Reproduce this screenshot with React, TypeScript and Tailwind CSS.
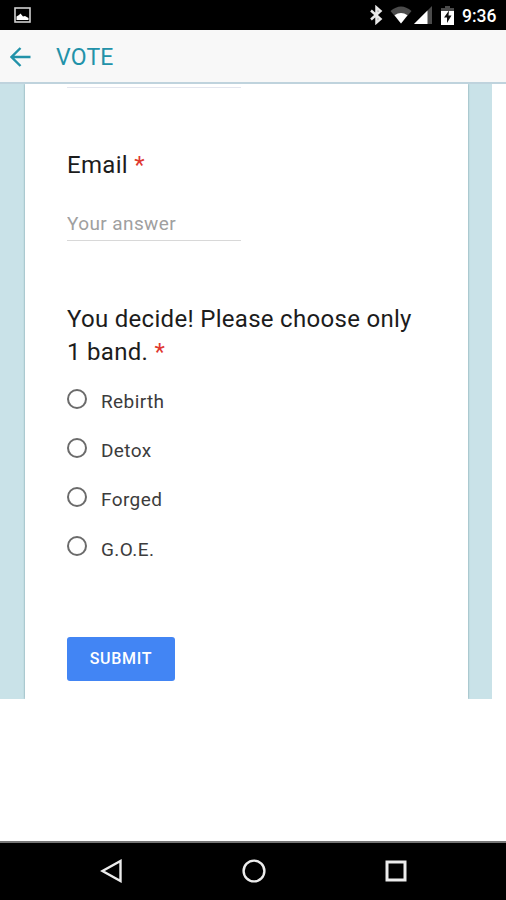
const options = ["Rebirth", "Detox", "Forged", "G.O.E."];

const StatusBar = () => (
  <div className="flex h-[30px] shrink-0 items-center bg-black pl-[14px] pr-[9px] text-white">
    <svg className="h-4 w-[17px]" viewBox="0 0 17 16" fill="none">
      <rect x="1" y="1" width="15" height="14" stroke="#d0d0d0" strokeWidth="1.6" />
      <path d="M2.5 13V9.5L5 8L6.5 6.5L9 9.5L11 9L14.5 11V13Z" fill="#fff" />
    </svg>
    <div className="ml-auto flex items-center">
      <svg className="h-5 w-[14px]" viewBox="0 0 14 20" fill="none" stroke="#e8e8e8" strokeWidth="2.5">
        <path d="M2 5.5L11.5 14L7.5 17.5V2.5L11.5 6L2 14.5" />
      </svg>
      <svg className="ml-[7px] h-[18px] w-[22px]" viewBox="0 0 22 18">
        <path d="M0.5 5Q11 -4 21.5 5L11 17.5Z" fill="#4b4b4b" />
        <path d="M4.5 9.3Q11 4.5 17.5 9.3L11 17.5Z" fill="#fff" />
      </svg>
      <svg className="ml-[2px] h-[18px] w-[18px]" viewBox="0 0 18 18">
        <path d="M18 0V18H0Z" fill="#4b4b4b" />
        <path d="M13.5 4.5V18H0Z" fill="#fff" />
      </svg>
      <svg className="ml-[9px] h-[19px] w-[13px]" viewBox="0 0 13 19">
        <path d="M4 0H9V2H13V6H0V2H4Z" fill="#4b4b4b" />
        <path d="M0 5H13V19H0Z" fill="#fff" />
        <path d="M8 4.5L3 11.5H6V17L10.5 9.5H7.5Z" fill="#111" />
      </svg>
      <span className="ml-2 mt-[3px] w-[35px] whitespace-nowrap text-[17.5px] font-medium leading-none">9:36</span>
    </div>
  </div>
);

const Header = () => (
  <header className="flex h-[54px] shrink-0 items-center border-b-2 border-[#bfd3dd] bg-[#f8f8f8] pl-[10px] text-[#2292a9]">
    <button aria-label="Back">
      <svg className="mt-0.5 h-5 w-[21px]" viewBox="0 0 21 20" fill="none" stroke="currentColor" strokeWidth="2.4">
        <path d="M20.5 10H2M10.5 1L1.5 10L10.5 19" />
      </svg>
    </button>
    <h1 className="ml-[25px] mt-0.5 text-[23px] leading-none tracking-[0.2px]">VOTE</h1>
  </header>
);

const NavigationBar = () => (
  <nav className="mt-auto flex h-[59px] shrink-0 items-center border-t-2 border-[#777] bg-black pb-0.5 pl-[100px]">
    <svg className="h-6 w-[22px]" viewBox="0 0 22 24" fill="none" stroke="#ececec" strokeWidth="2.4">
      <path d="M20.5 2V22L2.5 12Z" />
    </svg>
    <svg className="ml-[120px] h-6 w-6" viewBox="0 0 24 24" fill="none" stroke="#ececec" strokeWidth="2.4">
      <circle cx="12" cy="12" r="10.4" />
    </svg>
    <svg className="ml-[119px] h-[22px] w-[22px]" viewBox="0 0 22 22" fill="none" stroke="#ececec" strokeWidth="3">
      <rect x="2" y="2" width="18" height="18" />
    </svg>
  </nav>
);

export default function App() {
  return (
    <div className="flex h-[900px] w-[506px] flex-col overflow-hidden bg-white font-['Roboto',sans-serif]">
      <StatusBar />
      <Header />
      <main className="flex h-[615px] w-[492px] shrink-0 bg-[#c9e2e8] pl-[25px] pr-6">
        <form className="flex w-[443px] flex-col items-start bg-white px-[42px] shadow-[0_0_2px_#6f979e] [clip-path:inset(0_-3px)]">
          <div className="h-[4px] w-[174px] shrink-0 border-b border-[#e3e6ee]" />
          <label htmlFor="email" className="mt-[61px] text-[24px] leading-[33px] tracking-[0.3px] text-[#1c1c1c]">
            Email <span className="text-[#e0382f]">*</span>
          </label>
          <input
            id="email"
            type="email"
            placeholder="Your answer"
            className="mt-[26px] h-[33px] w-[174px] border-b border-[#d8d8d8] pb-px text-[19px] tracking-[0.4px] outline-none placeholder:text-[#a0a0a0]"
          />
          <h2 className="mt-[62px] whitespace-nowrap text-[24px] leading-[33px] tracking-[0.3px] text-[#1c1c1c]">
            You decide! Please choose only
            <br />1 band. <span className="text-[#e0382f]">*</span>
          </h2>
          <div className="mt-[10px] flex flex-col">
            {options.map((option) => (
              <label key={option} className="flex h-[49.2px] items-start">
                <input
                  type="radio"
                  name="band"
                  value={option}
                  className="mt-[9.5px] size-5 appearance-none rounded-full border-2 border-[#6b6b6b]"
                />
                <span className="ml-[14px] mt-[11px] text-[19px] leading-6 tracking-[0.4px] text-[#3c3c3c]">
                  {option}
                </span>
              </label>
            ))}
          </div>
          <button
            type="button"
            className="mt-[61px] h-[44px] w-[108px] rounded-[3px] bg-[#4285f4] text-[16px] font-medium tracking-[0.7px] text-white"
          >
            SUBMIT
          </button>
        </form>
      </main>
      <NavigationBar />
    </div>
  );
}
